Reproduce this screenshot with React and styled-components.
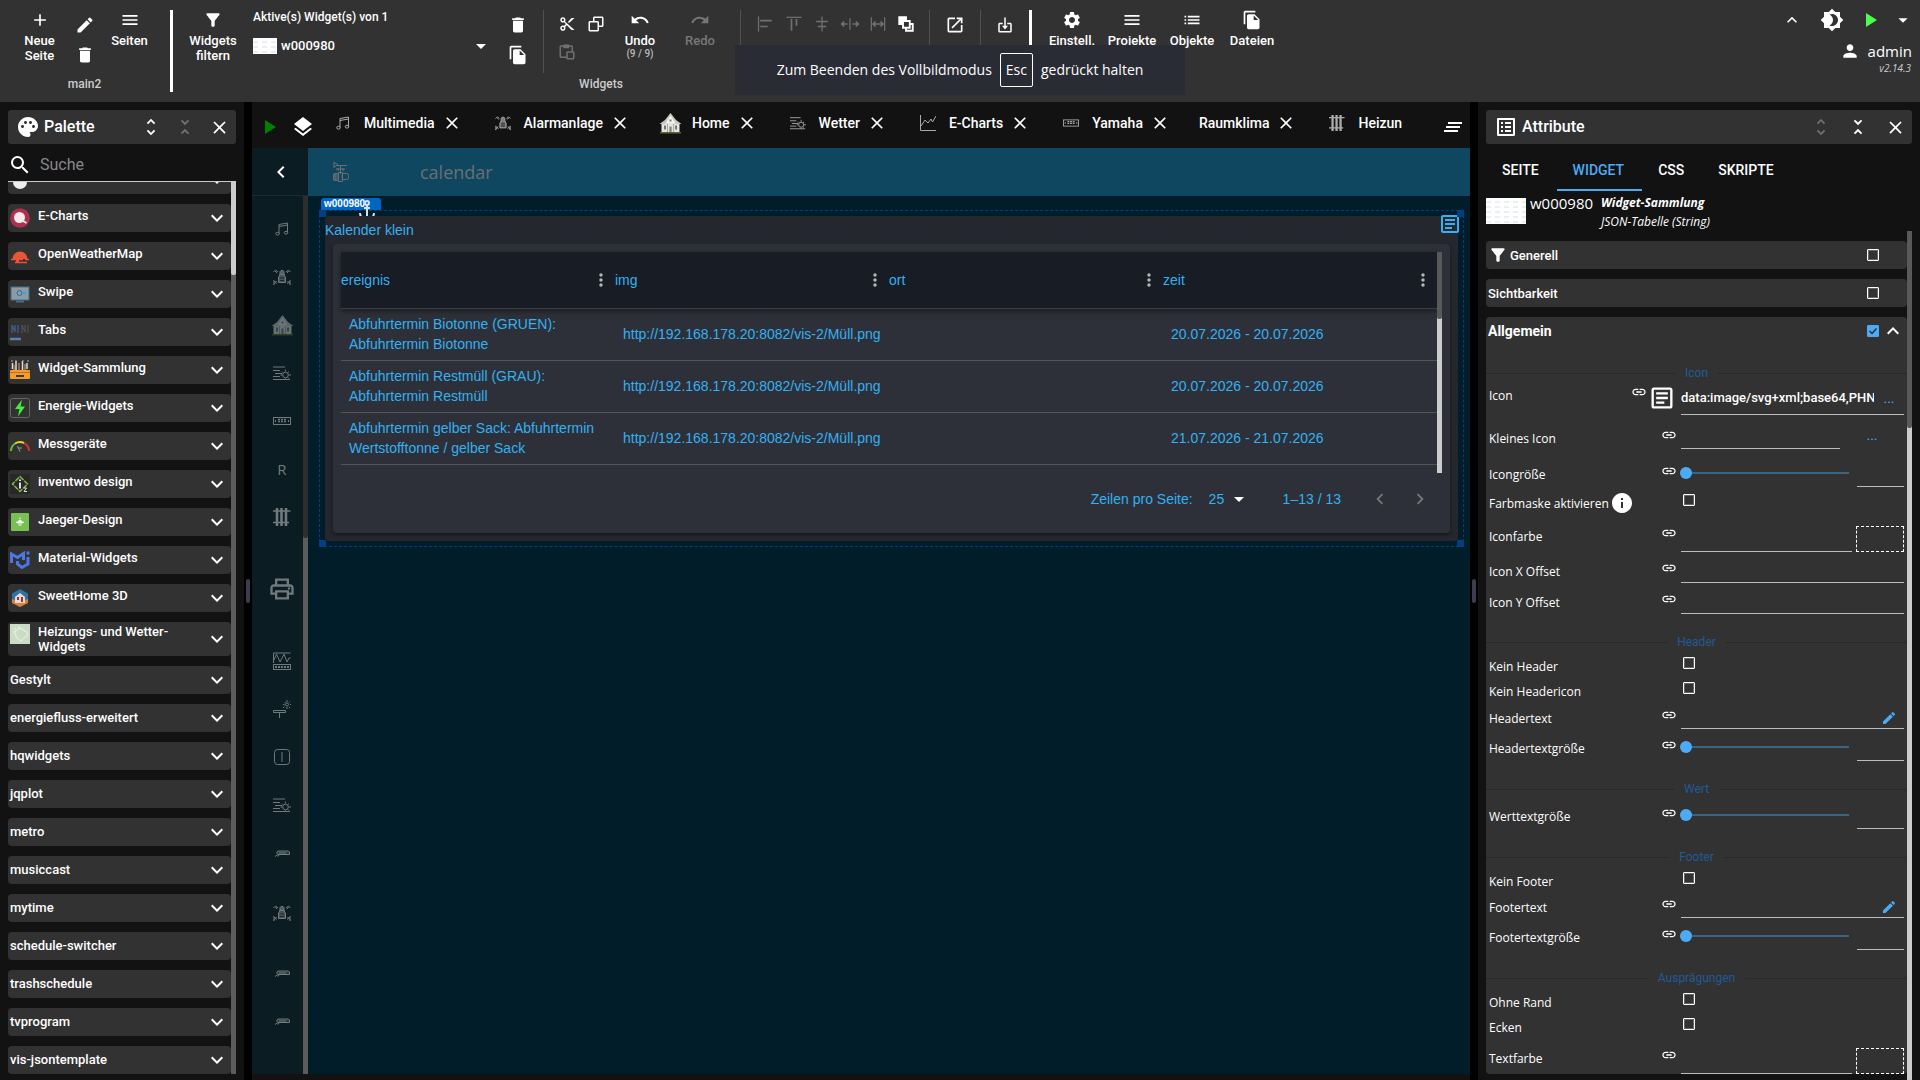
import React from "react";
import styled, { createGlobalStyle, css } from "styled-components";
import {
  MdAdd, MdEdit, MdDelete, MdMenu, MdFilterAlt, MdFileCopy, MdArrowDropDown, MdList, MdSettings,
  MdClose, MdUndo, MdRedo, MdUnfoldMore, MdUnfoldLess, MdPalette, MdSearch, MdExpandMore, MdExpandLess,
  MdLayers, MdPlayArrow, MdClearAll, MdListAlt, MdBrightness4, MdPerson, MdOpenInNew, MdChevronLeft,
  MdChevronRight, MdMoreVert, MdInfo, MdLink, MdOutlineArticle, MdOutlinePrint,
} from "react-icons/md";
import { BiCut, BiCopy, BiPaste, BiImport } from "react-icons/bi";

const GlobalStyle = createGlobalStyle`
  *, *::before, *::after { box-sizing: border-box; }
  html, body, #root { height: 100%; }
  body { margin: 0; background: #121212; color: #fff; font-family: Roboto, sans-serif; overflow: hidden; }
  button, input, select { font: inherit; color: inherit; }
  svg { display: block; flex: none; }
`;

const ui = `"Open Sans", "Noto Sans", sans-serif`;
const arial = `"Liberation Sans", Arial, sans-serif`;

const Page = styled.div`
  height: 100vh;
  display: grid;
  grid-template-rows: 102px minmax(0, 1fr);
`;

/* ---------- toolbar ---------- */

const Toolbar = styled.header`
  position: relative;
  display: flex;
  background: #323232;
  padding: 10px 2px 0 17px;
  font-weight: 500;
`;

const Group = styled.div`
  display: flex;
  flex-direction: column;
  padding: 0 ${(p) => p.$right || 0}px 0 ${(p) => p.$left || 0}px;
`;

const GroupRow = styled.div`
  display: flex;
  height: 63px;
`;

const GroupLabel = styled.div`
  font-size: 12px;
  line-height: 22px;
  text-align: center;
  color: #ccc;
`;

const IconButton = styled.button`
  display: flex;
  align-items: center;
  justify-content: center;
  flex: none;
  width: ${(p) => p.$w || 24}px;
  height: ${(p) => p.$h || p.$w || 24}px;
  padding: 0;
  border: 0;
  background: none;
  color: ${(p) => p.$color || "#fff"};
`;

const Stack = styled.div`
  display: flex;
  flex-direction: column;
  align-items: center;
  width: ${(p) => p.$w}px;
`;

const ToolButton = styled.button`
  display: flex;
  flex-direction: column;
  align-items: center;
  gap: 3px;
  width: ${(p) => p.$w}px;
  padding: 0;
  border: 0;
  background: none;
  color: ${(p) => (p.disabled ? "#777" : "#fff")};
  font-size: 13px;
  font-weight: 500;
  line-height: 15px;
  svg { height: 20px; }
  small { display: block; font-size: 10px; line-height: 11px; color: #bbb; }
`;

const StrongRule = styled.div`
  flex: none;
  width: 3px;
  height: 82px;
  background: #fff;
`;

const ThinRule = styled.div`
  flex: none;
  width: 1px;
  height: 63px;
  background: #515151;
  margin: 0 ${(p) => p.$right}px 0 ${(p) => p.$left}px;
`;

const WidgetSelect = styled.div`
  width: 240px;
  font-size: 12px;
  line-height: 14px;
`;

const SelectLine = styled.div`
  display: flex;
  align-items: center;
  gap: 4px;
  margin-top: 13px;
  height: 18px;
  font-size: 13px;
  span { flex: 1; }
`;

const Preview = styled.div`
  flex: none;
  width: ${(p) => p.$w}px;
  height: ${(p) => p.$h}px;
  background:
    repeating-linear-gradient(90deg, transparent 0 5px, rgba(255,255,255,.9) 5px 9px),
    repeating-linear-gradient(#fff 0 3px, #e9eff4 3px 5px);
`;

const IconGrid = styled.div`
  display: grid;
  grid-template-columns: repeat(${(p) => p.$cols}, 24px);
  grid-auto-rows: 28px;
  gap: 0 ${(p) => p.$gap}px;
  align-content: start;
  align-items: center;
`;

const Corner = styled.div`
  margin-left: auto;
  display: flex;
  flex-direction: column;
  align-items: flex-end;
`;

const CornerRow = styled.div`
  display: flex;
  height: 20px;
  align-items: center;
`;

const User = styled.div`
  display: flex;
  align-items: center;
  gap: 8px;
  margin: 10px 6px 0 0;
  font-family: ${ui};
  font-size: 15px;
  font-weight: 400;
  line-height: 22px;
`;

const Version = styled.div`
  margin-right: 7px;
  font: italic 10px/12px ${ui};
  color: #ccc;
`;

const Toast = styled.div`
  position: absolute;
  top: 45px;
  left: 50%;
  margin-left: -225px;
  width: 450px;
  height: 50px;
  display: flex;
  align-items: center;
  justify-content: center;
  gap: 8px;
  background: #2a2c35;
  font: 400 14px/20px ${ui};
  kbd {
    font: inherit;
    height: 34px;
    line-height: 32px;
    padding: 0 5px;
    border: 1px solid #fff;
    border-radius: 2px;
  }
`;

/* ---------- workspace ---------- */

const Work = styled.div`
  display: grid;
  grid-template-columns: 244px 8px minmax(0, 1fr) 8px 442px;
  min-height: 0;
`;

const Splitter = styled.div`
  display: flex;
  justify-content: center;
  background: #000;
  padding-top: 477px;
  &::before { content: ""; width: 4px; height: 24px; border-radius: 2px; background: #3d3d50; }
`;

const Panel = styled.section`
  display: flex;
  flex-direction: column;
  min-height: 0;
  padding: 8px 8px ${(p) => p.$bottom || 0}px;
`;

const PanelHead = styled.div`
  display: flex;
  align-items: center;
  gap: ${(p) => p.$gap}px;
  flex: none;
  height: 34px;
  padding: 0 5px 0 8px;
  border-radius: 3px;
  background: #323232;
  h2 { flex: 1; margin: 0 0 0 4px; font-size: 16px; font-weight: 500; line-height: 20px; }
`;

const PanelTitle = styled.div`
  display: flex;
  align-items: center;
  flex: 1;
`;

const Search = styled.label`
  display: flex;
  align-items: center;
  flex: none;
  gap: 8px;
  height: 38px;
  padding: 5px 0 0;
  border-bottom: 1px solid #ccc;
  input { width: 150px; padding: 0; border: 0; outline: 0; background: none; font-size: 16px; line-height: 20px; }
  input::placeholder { color: #888; opacity: 1; }
`;

const ScrollArea = styled.div`
  display: grid;
  grid-template-columns: minmax(0, 1fr) 5px;
  flex: 1;
  min-height: 0;
`;

const ScrollTrack = styled.div`
  background: ${(p) => p.$track};
  &::before { content: ""; display: block; height: ${(p) => p.$len}px; background: ${(p) => p.$thumb}; border-radius: 0 0 2px 2px; }
`;

const PaletteList = styled.div`
  overflow: hidden;
  display: flex;
  flex-direction: column;
  gap: 10px;
`;

const PaletteRow = styled.button`
  display: flex;
  align-items: center;
  gap: 8px;
  flex: none;
  height: ${(p) => (p.$tall ? 34 : 28)}px;
  padding: 0 2px;
  border: 0;
  border-radius: 4px;
  background: #323232;
  font-size: 13px;
  font-weight: 500;
  line-height: 15px;
  text-align: left;
  &:first-child { margin-top: -16px; }
  span { flex: 1; ${(p) => !p.$tall && css`padding-bottom: ${p.$icon ? 6 : 1}px;`} }
  > svg:first-child { ${(p) => p.$tall && css`align-self: flex-start; margin-top: 2px;`} }
`;

/* ---------- editor ---------- */

const Editor = styled.main`
  display: flex;
  flex-direction: column;
  min-width: 0;
  min-height: 0;
  padding-bottom: 6px;
`;

const TabBar = styled.nav`
  display: flex;
  align-items: center;
  flex: none;
  height: 46px;
  padding: 3px 5px 0 5px;
`;

const Tabs = styled.div`
  display: flex;
  flex: 1;
  min-width: 0;
  overflow: hidden;
  padding-bottom: 8px;
`;

const Tab = styled.div`
  display: flex;
  align-items: center;
  flex: none;
  padding: 0 15px 0 16px;
  font-size: 14px;
  font-weight: 500;
  line-height: 20px;
  i { display: flex; justify-content: center; width: 24px; margin-right: 9px; color: #aaa; }
  button { margin: 0 0 0 9px; }
`;

const Stage = styled.div`
  flex: 1;
  min-height: 0;
  display: grid;
  grid-template-columns: 56px minmax(0, 1fr);
  grid-template-rows: 48px minmax(0, 1fr);
  background: #011d2a;
`;

const BackCell = styled.div`
  display: flex;
  align-items: center;
  justify-content: center;
  padding: 1px 0 0 1px;
  background: #0b1c22;
  border-bottom: 1px solid #1a2b31;
`;

const TitleBar = styled.div`
  display: flex;
  align-items: center;
  padding-left: 24px;
  gap: 70px;
  background: #0f4761;
  color: #6b6f70;
  font: 18px/26px ${ui};
`;

const Strip = styled.div`
  display: grid;
  grid-template-columns: minmax(0, 1fr) 5px;
  background: #0b1c22;
  min-height: 0;
`;

const StripList = styled.div`
  overflow: hidden;
  padding: 9px 0 0 9px;
  color: #70797c;
  font: 15px/20px ${ui};
`;

const StripItem = styled.div`
  display: flex;
  align-items: center;
  justify-content: center;
  height: ${(p) => p.$h || 48}px;
  width: 42px;
`;

const Canvas = styled.div`
  padding: 14px 6px 0 11px;
  min-width: 0;
`;

const Selection = styled.div`
  position: relative;
  border: 1px dashed #003f82;
  padding: 5px;
`;

const Handle = styled.i`
  position: absolute;
  width: 7px;
  height: 7px;
  background: #003f82;
  ${(p) => p.$at}
`;

const NameTag = styled.div`
  position: absolute;
  left: 1px;
  top: -13px;
  width: 60px;
  height: 12px;
  padding-left: 3px;
  border-radius: 3px 3px 0 0;
  background: #0066c4;
  font: 700 10px/12px ${arial};
  color: #fff;
`;

const AnchorMark = styled.svg`
  position: absolute;
  left: 38px;
  top: -11px;
`;

const Card = styled.div`
  position: relative;
  background: #25272e;
  border-radius: 4px;
  padding-bottom: 8px;
  color: #33b1f2;
  font: 14px/20px ${arial};
`;

const CardHead = styled.div`
  display: flex;
  justify-content: space-between;
  height: 28px;
  line-height: 28px;
  svg { margin: -4px -4px 0 0; }
`;

const TablePanel = styled.div`
  margin: 0 8px;
  padding: 8px;
  border-radius: 4px;
  background: #2d3038;
  box-shadow: 0 2px 4px rgba(0, 0, 0, .4);
`;

const TableScroll = styled.div`
  display: grid;
  grid-template-columns: minmax(0, 1fr) 5px;
  height: 221px;
`;

const DataTable = styled.table`
  width: 100%;
  table-layout: fixed;
  border-collapse: separate;
  border-spacing: 0;
  align-self: start;
  th { height: 57px; padding: 0; background: #181c24; border-bottom: 1px solid #3c3f44; font-weight: 400; text-align: left; }
  th > div { display: flex; justify-content: space-between; align-items: center; padding-right: 4px; }
  thead { box-shadow: 0 2px 5px rgba(0, 0, 0, .45); }
  td { height: 52px; padding: 5px 8px 6px; border-bottom: 1px solid #515358; vertical-align: middle; line-height: 20px; }
`;

const Pagination = styled.div`
  display: flex;
  align-items: center;
  justify-content: flex-end;
  height: 52px;
  padding-right: 2px;
  select { appearance: none; width: 18px; margin-left: 16px; padding: 0; border: 0; background: none; }
  output { margin: 0 19px 0 32px; }
`;

/* ---------- attributes ---------- */

const AttrTabs = styled.div`
  display: flex;
  flex: none;
  height: 47px;
  button {
    padding: 7px 18px 0 16px; border: 0; border-bottom: 2px solid transparent; background: none;
    font-size: 14px; font-weight: 500; line-height: 20px; color: #fff;
  }
  button[aria-selected="true"] { color: #4dabf5; border-color: #4dabf5; }
`;

const WidgetInfo = styled.div`
  display: flex;
  flex: none;
  height: 40px;
  gap: 4px;
  padding-top: 2px;
  font: 15px/20px ${ui};
  > div:first-child { margin-top: 5px; }
`;

const WidgetNames = styled.div`
  margin-left: 4px;
  font-size: 12px;
  font-style: italic;
  b { display: block; line-height: 19px; font-weight: 700; }
`;

const AttrList = styled.div`
  overflow: hidden;
  display: flex;
  flex-direction: column;
  gap: 10px;
  padding-top: 10px;
`;

const Section = styled.div`
  flex: none;
  border-radius: 4px;
  background: #323232;
`;

const SectionHead = styled.div`
  display: flex;
  align-items: center;
  height: 28px;
  padding: 0 ${(p) => (p.$open ? 2 : 28)}px 0 2px;
  gap: 2px;
  font-size: ${(p) => (p.$open ? 14 : 13)}px;
  font-weight: ${(p) => (p.$open ? 700 : 500)};
  label { flex: 1; }
`;

const Check = styled.input`
  appearance: none;
  flex: none;
  width: 12px;
  height: 12px;
  margin: 0;
  border: 1px solid #fff;
  border-radius: 1px;
  box-shadow: inset 0 0 0 1px rgba(255, 255, 255, .25);
  &:checked { border-color: #4dabf5; background: #4dabf5; box-shadow: none; }
`;

const CheckWrap = styled.span`
  position: relative;
  display: flex;
  svg { position: absolute; inset: 0; pointer-events: none; }
`;

const Legend = styled.div`
  display: flex;
  align-items: center;
  gap: 10px;
  height: 36px;
  padding-top: 21px;
  color: #215a97;
  font-size: 12px;
  line-height: 15px;
  &::before, &::after { content: ""; flex: 1; height: 1px; background: #292929; }
`;

const Row = styled.div`
  display: flex;
  height: ${(p) => p.$h}px;
  margin-top: ${(p) => p.$gap || 0}px;
  padding: 0 3px;
  font: 12px/18px ${ui};
`;

const RowHead = styled.div`
  display: flex;
  align-items: center;
  flex: none;
  width: ${(p) => (p.$picture ? 159 : 192)}px;
  height: ${(p) => (p.$picture ? "22px" : "auto")};
  padding-right: ${(p) => (p.$picture ? 1 : 4)}px;
  label { padding-top: 8px; }
  > svg:last-child { margin: ${(p) => (p.$info ? "6px 0 0 1px" : "0 0 0 auto")}; }
`;

const Picture = styled.div`
  display: flex;
  align-items: center;
  width: 33px;
`;

const Field = styled.div`
  display: flex;
  flex: 1;
  min-width: 0;
  align-items: ${(p) => p.$align || "flex-end"};
  gap: ${(p) => p.$gap || 0}px;
  padding-left: ${(p) => p.$indent || 0}px;
  ${(p) => p.$line && css`border-bottom: 1px solid #bdbdbd;`}
`;

const TextInput = styled.input`
  flex: 1;
  min-width: 0;
  height: 100%;
  padding: 0;
  border: 0;
  outline: 0;
  background: none;
  font: 500 13px/20px Roboto, sans-serif;
  ${(p) => p.$line && css`border-bottom: 1px solid #bdbdbd;`}
  ${(p) => p.$w && css`flex: none; width: ${p.$w}px;`}
`;

const More = styled.button`
  width: ${(p) => p.$w}px;
  height: 100%;
  padding: 0;
  border: 0;
  background: none;
  color: #4dabf5;
  font: 14px/20px Roboto, sans-serif;
`;

const ColorBox = styled.button`
  flex: none;
  width: 48px;
  height: 26px;
  padding: 0;
  border: 1px dashed #fff;
  background: none;
`;

const Slider = styled.input`
  appearance: none;
  flex: 1;
  min-width: 0;
  height: 12px;
  margin: 0 0 8px -1px;
  background: linear-gradient(#3b6482, #3b6482) 6px 50% / 100% 2px no-repeat;
  &::-webkit-slider-thumb { appearance: none; width: 12px; height: 12px; border-radius: 50%; background: #4dabf5; }
`;

/* ---------- drawings ---------- */

const Svg = ({ s = 20, w, h, vb = "0 0 20 20", sw = 1, children }) => (
  <svg width={w || s} height={h || s} viewBox={vb} fill="none" stroke="currentColor" strokeWidth={sw}>{children}</svg>
);

const Notes = ({ s = 14 }) => (
  <Svg s={s} vb="0 0 14 14"><path d="M4 11.5V2.5L12.5 1v9.500M4 4.500L12.500 3" /><ellipse cx="2.500" cy="11.700" rx="1.800" ry="1.400" /><ellipse cx="11" cy="10.700" rx="1.800" ry="1.400" /></Svg>
);
const Siren = ({ s = 18 }) => (
  <Svg s={s} vb="0 0 18 18">
    <path d="M7 6V3.500L8 2.500h2l1 1V6" fill="currentColor" fillOpacity=".7" />
    <path d="M6.500 6.500h5V8l1 1v5.500h-7V9l1-1z" fill="currentColor" fillOpacity=".6" />
    <path d="M7 10h4M7 12.500h4" stroke="#222" />
    <path d="M.5 4L2 2.500 4 5M2.500 2L5 4M17.500 4L16 2.500 14 5M15.500 2L13 4M.5 12.500L4 15.500M.5 16.500L3.500 13M1 12.500v4.500M17.500 12.500L14 15.500M17.500 16.500L14.500 13M17 12.500v4.500" />
  </Svg>
);
const House = ({ w = 23, h = 22, dim }) => (
  <svg width={w} height={h} viewBox="0 0 23 22">
    <g opacity={dim ? 0.42 : 1}>
      <path d="M1 20h21v1.500H1z" fill="#596b2c" />
      <path d="M2.500 11h18v9h-18z" fill="#e4e4e0" />
      <path d="M0.500 12L6 8l5.500-7L17 8l5.500 4z" fill="#c9c9c4" />
      <path d="M6.500 11.500l5-8 5 8z" fill="#f5f5f2" />
      <path d="M10.500 14.500h2V20h-2z M5 13.500h2v4H5z M16 13.500h2v4h-2z M10.500 7.500h2v2h-2z" fill="#777" />
      <path d="M8.500 12v8M14.500 12v8" stroke="#aaa" />
    </g>
  </svg>
);
const Weather = ({ s = 18 }) => (
  <Svg s={s} vb="0 0 18 18"><path d="M0 3h12M0 6.500h7M2 9.500h7M0 12.500h7M0 15.500h17" /><circle cx="12.500" cy="11" r="2.800" /><path d="M12.500 5.500v2M12.500 14.500v1M7.500 11h2M15.500 11h2.500M9 7.500l1.200 1.200M16 7.500l-1.200 1.200M16 14.500l-1.200-1.200" /></Svg>
);
const Receiver = ({ w = 18 }) => (
  <Svg w={w} h={8} vb="0 0 18 8"><rect x=".5" y=".5" width="17" height="7" /><path d="M5 2.500h8M5 4.500h8" strokeWidth="1.500" strokeDasharray="2 1" /><path d="M2.500 3v2M15.500 3v2" /></Svg>
);
const Heater = ({ s = 18 }) => (
  <Svg s={s} vb="0 0 18 18"><path d="M4 0v18M8.500 0v18M13 0v18" strokeWidth="2.600" /><path d="M0 3h17.500M0 14.500h16" strokeWidth="1.500" /></Svg>
);
const ChartLines = () => (
  <Svg s={16} vb="0 0 16 16"><path d="M.5 0v15.500H16M1 11l4-6 3 3 3-4 1.500 3L16 1" /></Svg>
);
const WaveBox = () => (
  <Svg s={18} vb="0 0 18 18"><path d="M.5 11V1h17M1 8l2.500-6L7 10l4-8 3 8 2-4h1.500" /><rect x=".5" y="12.500" width="17" height="5" /><path d="M2 15h14" strokeWidth="2" strokeDasharray="2 1" /></Svg>
);
const Lamp = () => (
  <Svg s={18} vb="0 0 18 18"><path d="M.5 10.500h12v2H.5zM6.500 13v5M10 8l1.500-1.500" /><circle cx="14" cy="4.500" r="1.500" /><path d="M14 0v2M14 7v2M10 4.500h1.500M17 4.500h1M11.500 2l1 1M17 1.500l-1 1M16 7l1 1" /></Svg>
);
const SwitchBox = () => (<Svg s={16} vb="0 0 16 16"><rect x=".5" y=".5" width="15" height="15" rx="3" /><path d="M8 3v10" /></Svg>);
const Projector = () => (
  <Svg w={15} h={7} vb="0 0 15 7"><path d="M3 1h10.500l1 1v2.500H3L1.500 3z" fill="currentColor" fillOpacity=".3" /><path d="M4 3h7M0 6.500l3-2M3 6.500l1-1.500" /></Svg>
);
const Drum = () => (
  <Svg w={18} h={22} vb="0 0 18 22"><path d="M2 1v6M2 1l4 3-4 2M5 4.500h10M4 8h9M8.500 5v8M6 7v3M11 7v3" /><rect x="1.500" y="12.500" width="5" height="7" rx="1" fill="currentColor" fillOpacity=".5" /><rect x="10" y="12.500" width="6.500" height="6" rx="2" /><path d="M6.500 11.500h4v9h-4zM3 12v8" /></Svg>
);

const alignments = [
  ["M3 3v18", "M5 8h14M5 15h9"],
  ["M3 4h18", "M9 6v14M15 6v8"],
  ["M12 3v18", "M5 9h14M7 15h10"],
  ["M12 5v14", "M2 12h7M15 12h7M5 9l-3 3 3 3M19 9l3 3-3 3"],
  ["M4 4v16M20 4v16", "M7 12h10M9 9l-3 3 3 3M15 9l3 3-3 3"],
];
const AlignIcon = ({ d }) => (<Svg s={20} vb="0 0 24 24" sw={2}><path d={d[0]} strokeWidth="1.500" /><path d={d[1]} /></Svg>);
const ToFront = () => (
  <svg width="18" height="18" viewBox="0 0 24 24" fill="none" stroke="#fff" strokeWidth="2.500"><path d="M3 3h9v9H3z" fill="#fff" /><path d="M8 8h9v9H8z" fill="#323232" /><path d="M17 12h4v9h-9v-4" /></svg>
);

const paletteArt = {
  clip: <Svg><ellipse cx="10" cy="12" rx="7" ry="7" fill="#eee" stroke="none" /></Svg>,
  echarts: <Svg><circle cx="10" cy="10" r="9.800" fill="#aa3150" stroke="none" /><circle cx="9.500" cy="9.500" r="5.500" fill="#f3e8ea" stroke="none" /><path d="M13 13l3.500 2" stroke="#f3e8ea" strokeWidth="2" /></Svg>,
  owm: <Svg><path d="M2.500 13a7.500 7.500 0 1 1 15 0z" fill="#ea5437" stroke="none" /><path d="M1 13.500h12M15 13.500h4M5 16.500h12M6 15h3" stroke="#ea5437" strokeWidth="1.500" /></Svg>,
  swipe: <Svg><rect x="1" y="3" width="18" height="13" fill="#8d9ba4" stroke="#3f6f8d" /><path d="M6 17.500h8" stroke="#3f6f8d" strokeWidth="2" /><circle cx="9.500" cy="9" r="2.500" stroke="#2f6e9b" /><path d="M12 9h4" stroke="#35a4dd" strokeWidth="2" /></Svg>,
  tabs: <Svg><path d="M2 11V3l3 7V3M8 11V3" stroke="#3c5a82" strokeWidth="1.500" /><path d="M12 11V3l3 7V3M18 11V3" stroke="#565656" /><path d="M0 17h11" stroke="#5a7eb0" strokeWidth="2.500" /></Svg>,
  tools: <Svg><path d="M2.500 3v6M6 1v9M12.500 1v9M17 3v6" stroke="#ddd" strokeWidth="1.500" /><path d="M4 5v5M9 3v7M15 4v6" stroke="#8b6a45" strokeWidth="2" /><path d="M1 1h2M5 0h2M12 0h2M17 1h2" stroke="#aaa" /><rect x="0" y="10" width="20" height="9" rx="1" fill="#f39c2c" stroke="none" /><path d="M0 12.500h20" stroke="#c46a24" /><path d="M6 16h8" stroke="#3a3a3a" strokeWidth="2" /></Svg>,
  energy: <Svg><rect x=".5" y=".5" width="19" height="19" rx="2" stroke="#666" /><path d="M12 1.500L5 11h4.500L8 18.500 15 8.500h-4.500z" fill="#41ef3c" stroke="none" /></Svg>,
  gauge: <Svg sw={2}><path d="M1 15a9.500 9.500 0 0 1 4-7.500" stroke="#57c332" /><path d="M5 7.500a9 9 0 0 1 9-.5" stroke="#e5d62b" /><path d="M14 7a9.500 9.500 0 0 1 5 8" stroke="#d02e2a" /><path d="M10 15.500L7.500 10M8 12h4" stroke="#999" strokeWidth="1" /></Svg>,
  inventwo: <Svg><rect width="20" height="20" fill="#282828" stroke="none" /><path d="M10 2.500L17.500 10 10 17.500 2.500 10z" stroke="#85b64a" strokeWidth="1.500" strokeDasharray="5 1" /><path d="M10 5.500v1.500M10 8.500v6" stroke="#ddd" strokeWidth="2" /><path d="M14 14h2.500l-2.500 3.500h3" stroke="#ddd" /></Svg>,
  jaeger: <Svg><rect x="1" y="1" width="18" height="18" rx="1" fill="#77c153" stroke="none" /><path d="M7.500 11a2.500 2.500 0 1 1 5 0zM8.500 13h3" fill="#fff" stroke="#fff" /><path d="M10 5.500v2M6 10l1 .5M14 10l-1 .5" stroke="#fff" /></Svg>,
  material: <Svg sw={3}><path d="M1.500 13V4L7.500 7.500 13.500 3.500V10" stroke="#4b77e8" /><path d="M7.500 11v3l4.500 3.500 6-3.500V7M18 1.500v3" stroke="#4b77e8" /></Svg>,
  sweet: <Svg><path d="M10 1l8 4.500v9L10 19l-8-4.500v-9z" fill="#2d73a5" stroke="none" /><path d="M2 11l8 3 8-3v4l-8 4-8-4z" fill="#dd7e3b" stroke="none" /><path d="M5 9l5-4 5 4v6H5z" fill="#e8dcd2" stroke="none" /><path d="M7 9h2v3H7zM11 9h2v5h-2z" fill="#a72c2c" stroke="none" /></Svg>,
  heating: <Svg><rect width="20" height="20" fill="#cbdcc5" stroke="none" /><path d="M6 11a3 3 0 0 1 1-5 4 4 0 0 1 7 1 3 3 0 0 1 1 6l-4 4-5-4zM4 4l2 2M3 8h2M9 2v2" stroke="#eef4ea" /></Svg>,
};

const palette = [
  ["", "clip"], ["E-Charts", "echarts"], ["OpenWeatherMap", "owm"], ["Swipe", "swipe"], ["Tabs", "tabs"],
  ["Widget-Sammlung", "tools"], ["Energie-Widgets", "energy"], ["Messgeräte", "gauge"],
  ["inventwo design", "inventwo"], ["Jaeger-Design", "jaeger"], ["Material-Widgets", "material"],
  ["SweetHome 3D", "sweet"], ["Heizungs- und Wetter-Widgets", "heating"], ["Gestylt"],
  ["energiefluss-erweitert"], ["hqwidgets"], ["jqplot"], ["metro"], ["musiccast"], ["mytime"],
  ["schedule-switcher"], ["trashschedule"], ["tvprogram"], ["vis-jsontemplate"],
];

const tabs = [
  ["Multimedia", <Notes />], ["Alarmanlage", <Siren s={16} />], ["Home", <House />], ["Wetter", <Weather s={16} />],
  ["E-Charts", <ChartLines />], ["Yamaha", <Receiver w={16} />], ["Raumklima", null], ["Heizun", <Heater s={16} />],
];

const strip = [
  [<Notes />], [<Siren />], [<House dim />], [<Weather />], [<Receiver />], ["R"], [<Heater />],
  [<MdOutlinePrint size={28} />, 96], [<WaveBox />], [<Lamp />], [<SwitchBox />], [<Weather />], [<Projector />],
  [<Siren />, 72], [<Projector />], [<Projector />],
];

const events = [
  ["Abfuhrtermin Biotonne (GRUEN): Abfuhrtermin Biotonne", "20.07.2026 - 20.07.2026"],
  ["Abfuhrtermin Restmüll (GRAU): Abfuhrtermin Restmüll", "20.07.2026 - 20.07.2026"],
  ["Abfuhrtermin gelber Sack: Abfuhrtermin Wertstofftonne / gelber Sack", "21.07.2026 - 21.07.2026"],
];

const attributes = [
  ["legend", "Icon"], ["picture", "Icon", 34], ["file", "Kleines Icon", 28, 6], ["slider", "Icongröße", 32, 6],
  ["check", "Farbmaske aktivieren", 25, 0, true], ["color", "Iconfarbe", 38, 2], ["text", "Icon X Offset", 31],
  ["text", "Icon Y Offset", 31],
  ["legend", "Header"], ["check", "Kein Header", 25], ["check", "Kein Headericon", 25], ["edit", "Headertext", 29],
  ["slider", "Headertextgröße", 32],
  ["legend", "Wert"], ["slider", "Werttextgröße", 32],
  ["legend", "Footer"], ["check", "Kein Footer", 25], ["edit", "Footertext", 28], ["slider", "Footertextgröße", 32],
  ["legend", "Ausprägungen"], ["check", "Ohne Rand", 25], ["check", "Ecken", 25], ["color", "Textfarbe", 38],
];

function FieldBody({ kind, id, label }) {
  switch (kind) {
    case "picture":
      return (<Field $line><TextInput id={id} defaultValue="data:image/svg+xml;base64,PHN" /><More $w={30} aria-label="Icon wählen">...</More></Field>);
    case "file":
      return (<Field><TextInput id={id} $line /><More $w={64} aria-label="Kleines Icon wählen">...</More></Field>);
    case "slider":
      return (<Field $gap={8}><Slider id={id} type="range" min="0" max="100" defaultValue="0" /><TextInput $line $w={47} aria-label={label} /></Field>);
    case "check":
      return (<Field $align="center" $indent={2}><Check id={id} type="checkbox" /></Field>);
    case "color":
      return (<Field $gap={4}><TextInput id={id} $line /><ColorBox aria-label={label} /></Field>);
    case "edit":
      return (<Field $line><TextInput id={id} /><IconButton $w={30} $h={20} $color="#4dabf5" aria-label={label + " bearbeiten"}><MdEdit size={16} /></IconButton></Field>);
    default:
      return (<Field><TextInput id={id} $line /></Field>);
  }
}

function Attribute({ kind, label, h, gap, info, id }) {
  if (kind === "legend") return <Legend>{label}</Legend>;
  return (
    <Row $h={h} $gap={gap}>
      <RowHead $picture={kind === "picture"} $info={info}>
        <label htmlFor={id}>{label}</label>
        {info && <MdInfo size={24} />}
        {kind !== "check" && <MdLink size={16} />}
      </RowHead>
      {kind === "picture" && <Picture><MdOutlineArticle size={28} /></Picture>}
      <FieldBody kind={kind} id={id} label={label} />
    </Row>
  );
}

function MainToolbar() {
  return (
    <Toolbar>
      <Group $right={18}>
        <GroupRow>
          <ToolButton $w={45}><MdAdd size={20} />Neue Seite</ToolButton>
          <Stack $w={45}>
            <IconButton $h={30} aria-label="Bearbeiten"><MdEdit size={20} /></IconButton>
            <IconButton $h={30} aria-label="Löschen"><MdDelete size={20} /></IconButton>
          </Stack>
          <ToolButton $w={45}><MdMenu size={20} />Seiten</ToolButton>
        </GroupRow>
        <GroupLabel>main2</GroupLabel>
      </Group>
      <StrongRule />
      <Group>
        <GroupRow>
          <Stack $w={13} />
          <ToolButton $w={54}><MdFilterAlt size={22} />Widgets filtern</ToolButton>
          <Stack $w={13} />
          <WidgetSelect>
            Aktive(s) Widget(s) von 1
            <SelectLine><Preview $w={24} $h={16} /><span>w000980</span><MdArrowDropDown size={24} /></SelectLine>
          </WidgetSelect>
          <Stack $w={50}>
            <IconButton $h={30} aria-label="Widget löschen"><MdDelete size={20} /></IconButton>
            <IconButton $h={30} aria-label="Widget kopieren"><MdFileCopy size={20} /></IconButton>
          </Stack>
          <ThinRule $left={0} $right={11} />
          <IconGrid $cols={2} $gap={5}>
            <IconButton aria-label="Ausschneiden"><BiCut size={18} /></IconButton>
            <IconButton aria-label="Kopieren"><BiCopy size={18} /></IconButton>
            <IconButton $color="#707070" aria-label="Einfügen"><BiPaste size={18} /></IconButton>
          </IconGrid>
          <Stack $w={2} />
          <ToolButton $w={60}><MdUndo size={20} /><span>Undo<small>(9 / 9)</small></span></ToolButton>
          <ToolButton $w={60} disabled><MdRedo size={20} />Redo</ToolButton>
          <ThinRule $left={10} $right={13} />
          <IconGrid $cols={6} $gap={4}>
            {alignments.map((d, i) => <IconButton key={i} $color="#707070" aria-label={"Ausrichten " + (i + 1)}><AlignIcon d={d} /></IconButton>)}
            <IconButton aria-label="Nach vorne"><ToFront /></IconButton>
          </IconGrid>
          <ThinRule $left={11} $right={13} />
          <IconButton $h={30} aria-label="Öffnen"><MdOpenInNew size={20} /></IconButton>
          <ThinRule $left={13} $right={12} />
          <IconButton $h={30} aria-label="Importieren"><BiImport size={18} /></IconButton>
          <Stack $w={12} />
        </GroupRow>
        <GroupLabel>Widgets</GroupLabel>
      </Group>
      <StrongRule />
      <Group $left={10}>
        <GroupRow>
          <ToolButton $w={60}><MdSettings size={20} />Einstell.</ToolButton>
          <ToolButton $w={60}><MdMenu size={20} />Projekte</ToolButton>
          <ToolButton $w={60}><MdList size={20} />Objekte</ToolButton>
          <ToolButton $w={60}><MdFileCopy size={20} />Dateien</ToolButton>
        </GroupRow>
      </Group>
      <Corner>
        <CornerRow>
          <IconButton $w={40} $h={20} aria-label="Einklappen"><MdExpandLess size={20} /></IconButton>
          <IconButton $w={40} $h={20} aria-label="Design wechseln"><MdBrightness4 size={24} /></IconButton>
          <IconButton $w={36} $h={20} $color="#4cff4c" aria-label="Starten"><MdPlayArrow size={24} /></IconButton>
          <IconButton $w={30} $h={20} aria-label="Mehr"><MdArrowDropDown size={22} /></IconButton>
        </CornerRow>
        <User><MdPerson size={20} />admin</User>
        <Version>v2.14.3</Version>
      </Corner>
      <Toast>Zum Beenden des Vollbildmodus <kbd>Esc</kbd> gedrückt halten</Toast>
    </Toolbar>
  );
}

function PalettePanel() {
  return (
    <Panel $bottom={6}>
      <PanelHead $gap={10}>
        <PanelTitle><MdPalette size={24} /><h2>Palette</h2></PanelTitle>
        <IconButton aria-label="Alle aufklappen"><MdUnfoldMore size={22} /></IconButton>
        <IconButton $color="#707070" aria-label="Alle zuklappen"><MdUnfoldLess size={22} /></IconButton>
        <IconButton aria-label="Schließen"><MdClose size={21} /></IconButton>
      </PanelHead>
      <Search><MdSearch size={24} /><input placeholder="Suche" aria-label="Suche" /></Search>
      <ScrollArea>
        <PaletteList>
          {palette.map(([name, art]) => (
            <PaletteRow key={name || art} $icon={!!art} $tall={name.length > 25} aria-label={name || "Widgets"}>
              {art && paletteArt[art]}<span>{name}</span><MdExpandMore size={24} />
            </PaletteRow>
          ))}
        </PaletteList>
        <ScrollTrack $track="#5c5c5c" $thumb="#ccc" $len={93} />
      </ScrollArea>
    </Panel>
  );
}

function CalendarWidget() {
  return (
    <Selection>
      <NameTag>w000980</NameTag>
      <AnchorMark width="20" height="20" viewBox="0 0 20 20" fill="none" stroke="#d5e2ee" strokeWidth="2">
        <circle cx="9" cy="3" r="2" /><path d="M9 5v13M6 8h6M2 13c0 4 3 6 7 6s7-2 7-6" />
      </AnchorMark>
      <Card>
        <CardHead>Kalender klein<MdOutlineArticle size={24} /></CardHead>
        <TablePanel>
          <TableScroll>
            <DataTable>
              <thead>
                <tr>{["ereignis", "img", "ort", "zeit"].map((c) => <th key={c}><div>{c}<MdMoreVert size={20} color="#b4b6b9" /></div></th>)}</tr>
              </thead>
              <tbody>
                {events.map(([what, when]) => (
                  <tr key={what}><td>{what}</td><td>http://192.168.178.20:8082/vis-2/Müll.png</td><td /><td>{when}</td></tr>
                ))}
              </tbody>
            </DataTable>
            <ScrollTrack $track="#ccc" $thumb="#595959" $len={67} />
          </TableScroll>
          <Pagination>
            <label htmlFor="rows">Zeilen pro Seite:</label>
            <select id="rows" defaultValue="25"><option>25</option></select>
            <MdArrowDropDown size={24} color="#fff" />
            <output>1–13 / 13</output>
            <IconButton $w={40} $color="#75777b" aria-label="Vorherige Seite"><MdChevronLeft size={22} /></IconButton>
            <IconButton $w={40} $color="#75777b" aria-label="Nächste Seite"><MdChevronRight size={22} /></IconButton>
          </Pagination>
        </TablePanel>
      </Card>
      <Handle $at="left:-1px;top:-1px;" /><Handle $at="right:-1px;top:-1px;" />
      <Handle $at="left:-1px;bottom:-1px;" /><Handle $at="right:-1px;bottom:-1px;" />
    </Selection>
  );
}

function EditorArea() {
  return (
    <Editor>
      <TabBar>
        <IconButton $color="#008000" aria-label="Starten"><MdPlayArrow size={24} /></IconButton>
        <Stack $w={10} />
        <IconButton aria-label="Seiten"><MdLayers size={24} /></IconButton>
        <Tabs>
          {tabs.map(([name, icon]) => (
            <Tab key={name}>{icon && <i>{icon}</i>}{name}{name !== "Heizun" && <IconButton $w={16} aria-label={name + " schließen"}><MdClose size={20} /></IconButton>}</Tab>
          ))}
        </Tabs>
        <IconButton aria-label="Alle Seiten"><MdClearAll size={24} /></IconButton>
      </TabBar>
      <Stage>
        <BackCell><IconButton aria-label="Zurück"><MdChevronLeft size={24} /></IconButton></BackCell>
        <TitleBar><Drum />calendar</TitleBar>
        <Strip>
          <StripList>{strip.map(([icon, h], i) => <StripItem key={i} $h={h}>{icon}</StripItem>)}</StripList>
          <ScrollTrack $track="#5c5c5c" $thumb="#2e2e2e" $len={342} />
        </Strip>
        <Canvas><CalendarWidget /></Canvas>
      </Stage>
    </Editor>
  );
}

function AttributePanel() {
  return (
    <Panel>
      <PanelHead $gap={13}>
        <PanelTitle><MdListAlt size={24} /><h2>Attribute</h2></PanelTitle>
        <IconButton $color="#707070" aria-label="Alle aufklappen"><MdUnfoldMore size={22} /></IconButton>
        <IconButton aria-label="Alle zuklappen"><MdUnfoldLess size={22} /></IconButton>
        <IconButton aria-label="Schließen"><MdClose size={21} /></IconButton>
      </PanelHead>
      <AttrTabs role="tablist">
        {["SEITE", "WIDGET", "CSS", "SKRIPTE"].map((t) => <button key={t} role="tab" aria-selected={t === "WIDGET"}>{t}</button>)}
      </AttrTabs>
      <WidgetInfo>
        <Preview $w={40} $h={26} />w000980
        <WidgetNames><b>Widget-Sammlung</b>JSON-Tabelle (String)</WidgetNames>
      </WidgetInfo>
      <ScrollArea>
        <AttrList>
          <Section><SectionHead><MdFilterAlt size={20} /><label htmlFor="s1">Generell</label><Check id="s1" type="checkbox" /></SectionHead></Section>
          <Section><SectionHead><label htmlFor="s2">Sichtbarkeit</label><Check id="s2" type="checkbox" /></SectionHead></Section>
          <Section>
            <SectionHead $open>
              <label htmlFor="s3">Allgemein</label>
              <CheckWrap>
                <Check id="s3" type="checkbox" defaultChecked />
                <svg width="12" height="12" viewBox="0 0 12 12" fill="none" stroke="#28323a" strokeWidth="1.500"><path d="M2.500 6l2.500 2.500L9.500 3.500" /></svg>
              </CheckWrap>
              <IconButton aria-label="Zuklappen"><MdExpandLess size={24} /></IconButton>
            </SectionHead>
            {attributes.map(([kind, label, h, gap, info], i) => (
              <Attribute key={i} id={"attr" + i} kind={kind} label={label} h={h} gap={gap} info={info} />
            ))}
          </Section>
        </AttrList>
        <ScrollTrack $track="#ccc" $thumb="#595959" $len={197} />
      </ScrollArea>
    </Panel>
  );
}

export default function App() {
  return (
    <Page>
      <GlobalStyle />
      <MainToolbar />
      <Work>
        <PalettePanel />
        <Splitter />
        <EditorArea />
        <Splitter />
        <AttributePanel />
      </Work>
    </Page>
  );
}
